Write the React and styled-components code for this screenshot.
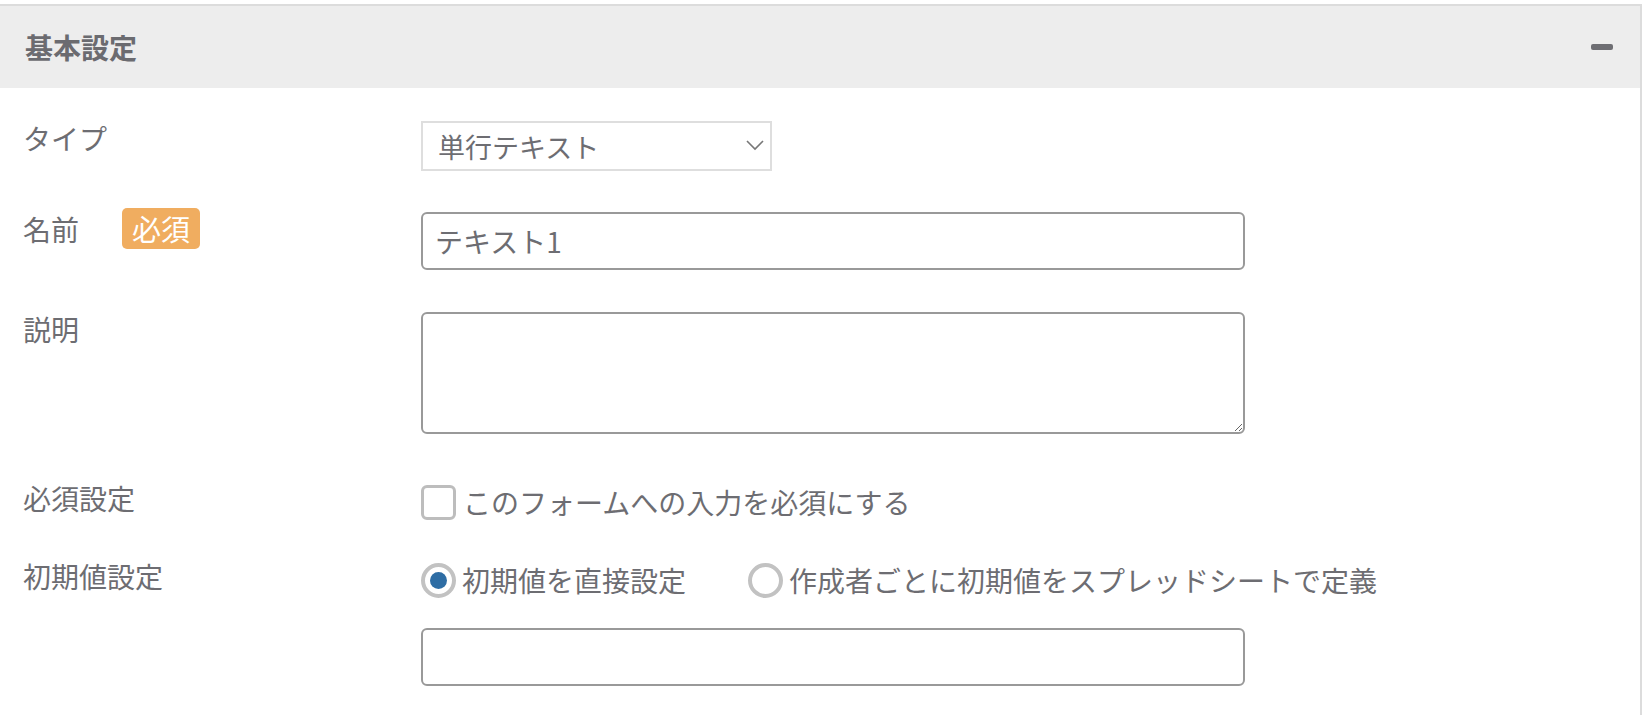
import React, { useState } from "react";
import styled, { createGlobalStyle } from "styled-components";

const GlobalStyle = createGlobalStyle`
  html, body {
    margin: 0;
    padding: 0;
    background: #fff;
  }
  body {
    font-family: "Noto Sans CJK JP", "Noto Sans", sans-serif;
    color: #6b6b70;
  }
  * {
    box-sizing: border-box;
  }
`;

const Page = styled.div`
  padding-top: 4px;
`;

const Panel = styled.section`
  border-top: 2px solid #dcdcdc;
  border-right: 2px solid #dcdcdc;
  width: 1642px;
  min-height: 711px;
`;

const Header = styled.header`
  height: 82px;
  background: #ededed;
  display: flex;
  align-items: center;
  justify-content: space-between;
  padding: 0 27px 0 25px;
`;

const Title = styled.h2`
  margin: 0;
  font-size: 28px;
  font-weight: 700;
  line-height: 34px;
  color: #6b6b70;
`;

const Collapse = styled.span`
  display: block;
  width: 22px;
  height: 6px;
  border-radius: 2px;
  background: #6e6e73;
  cursor: pointer;
`;

const Body = styled.div`
  padding: 33px 0 0 23px;
`;

const Row = styled.div`
  display: grid;
  grid-template-columns: 398px 1fr;
  margin-bottom: ${(p) => p.$mb || 0}px;
`;

const LabelCell = styled.div`
  display: flex;
  align-items: flex-start;
`;

const Label = styled.span`
  font-size: 28px;
  line-height: 34px;
  color: #6d6d72;
`;

const Badge = styled.span`
  margin: -4px 0 0 43px;
  height: 41px;
  padding: 0 10px;
  border-radius: 5px;
  background: #f0ad60;
  color: #fff;
  font-size: 29px;
  line-height: 41px;
`;

const Field = styled.div`
  display: flex;
  flex-direction: column;
  align-items: flex-start;
`;

const SelectWrap = styled.div`
  position: relative;
  width: 351px;
  height: 50px;
`;

const Select = styled.select`
  display: block;
  width: 100%;
  height: 100%;
  appearance: none;
  border: 2px solid #dedede;
  border-radius: 0;
  background: #fff;
  padding: 0 40px 0 15px;
  font-family: inherit;
  font-size: 27px;
  color: #6d6d72;
  outline: none;
`;

const Chevron = styled.svg`
  position: absolute;
  right: 8px;
  top: 19px;
  pointer-events: none;
`;

const TextInput = styled.input`
  display: block;
  width: 824px;
  height: 58px;
  border: 2px solid #999;
  border-radius: 6px;
  padding: 0 12px;
  font-family: inherit;
  font-size: 28px;
  color: #6d6d72;
  outline: none;
  margin-top: ${(p) => p.$mt || 0}px;
`;

const TextArea = styled.textarea`
  display: block;
  width: 824px;
  height: 122px;
  border: 2px solid #999;
  border-radius: 6px;
  padding: 8px 12px;
  font-family: inherit;
  font-size: 28px;
  color: #6d6d72;
  outline: none;
`;

const Options = styled.div`
  display: flex;
  align-items: center;
  height: 42px;
`;

const Option = styled.label`
  display: flex;
  align-items: center;
  margin-right: ${(p) => p.$mr || 0}px;
  font-size: 28px;
  line-height: 42px;
  color: #6d6d72;
  cursor: pointer;
`;

const Box = styled.span`
  width: 35px;
  height: 35px;
  border: 3px solid #bdbdbd;
  border-radius: 6px;
  margin-right: 7px;
  background: #fff;
`;

const Radio = styled.span`
  width: 35px;
  height: 35px;
  border: 4px solid #c2c2c2;
  border-radius: 50%;
  margin-right: 6px;
  display: flex;
  align-items: center;
  justify-content: center;
  background: #fff;

  &::after {
    content: "";
    width: 17px;
    height: 17px;
    border-radius: 50%;
    background: ${(p) => (p.$on ? "#2e6da4" : "transparent")};
  }
`;

export default function App() {
  const [mode, setMode] = useState("direct");
  const [required, setRequired] = useState(false);

  return (
    <Page>
      <GlobalStyle />
      <Panel>
        <Header>
          <Title>基本設定</Title>
          <Collapse />
        </Header>
        <Body>
          <Row $mb={41}>
            <LabelCell>
              <Label>タイプ</Label>
            </LabelCell>
            <Field>
              <SelectWrap>
                <Select defaultValue="single">
                  <option value="single">単行テキスト</option>
                  <option value="multi">複数行テキスト</option>
                </Select>
                <Chevron width="18" height="11" viewBox="0 0 18 11">
                  <path d="M1 1l8 8 8-8" fill="none" stroke="#777" strokeWidth="1.6" />
                </Chevron>
              </SelectWrap>
            </Field>
          </Row>

          <Row $mb={42}>
            <LabelCell>
              <Label>名前</Label>
              <Badge>必須</Badge>
            </LabelCell>
            <Field>
              <TextInput defaultValue="テキスト1" />
            </Field>
          </Row>

          <Row $mb={47}>
            <LabelCell>
              <Label>説明</Label>
            </LabelCell>
            <Field>
              <TextArea />
            </Field>
          </Row>

          <Row $mb={36}>
            <LabelCell>
              <Label>必須設定</Label>
            </LabelCell>
            <Options>
              <Option onClick={() => setRequired(!required)}>
                <Box />
                このフォームへの入力を必須にする
              </Option>
            </Options>
          </Row>

          <Row>
            <LabelCell>
              <Label>初期値設定</Label>
            </LabelCell>
            <Field>
              <Options>
                <Option $mr={62} onClick={() => setMode("direct")}>
                  <Radio $on={mode === "direct"} />
                  初期値を直接設定
                </Option>
                <Option onClick={() => setMode("sheet")}>
                  <Radio $on={mode === "sheet"} />
                  作成者ごとに初期値をスプレッドシートで定義
                </Option>
              </Options>
              <TextInput $mt={27} />
            </Field>
          </Row>
        </Body>
      </Panel>
    </Page>
  );
}
